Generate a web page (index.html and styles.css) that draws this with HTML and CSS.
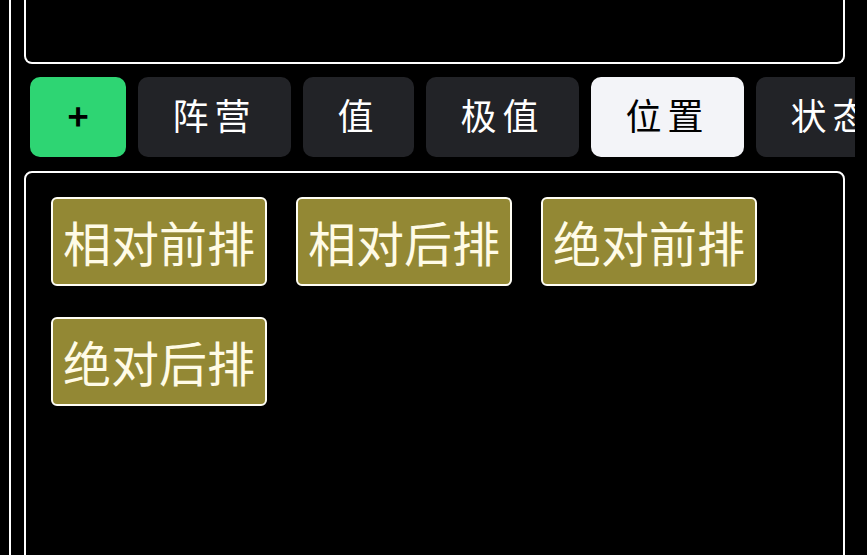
FILE: index.html
```html
<!DOCTYPE html>
<html lang="zh">
<head>
<meta charset="utf-8">
<title>位置</title>
<link rel="stylesheet" href="styles.css">
</head>
<body>
<div class="frame">
  <div class="panel panel-top"></div>
  <div class="tabs">
    <button class="tab tab-add">+</button>
    <button class="tab">阵营</button>
    <button class="tab">值</button>
    <button class="tab">极值</button>
    <button class="tab tab-active">位置</button>
    <button class="tab">状态</button>
  </div>
  <div class="panel panel-main">
    <div class="chips">
      <span class="chip">相对前排</span>
      <span class="chip">相对后排</span>
      <span class="chip">绝对前排</span>
      <span class="chip">绝对后排</span>
    </div>
  </div>
</div>
</body>
</html>
```

FILE: styles.css
```css
html, body {
  margin: 0;
  padding: 0;
  background: #000;
  overflow: hidden;
  height: 555px;
}

body {
  font-family: "Noto Sans CJK SC", "Noto Sans", sans-serif;
  color: #fff;
}

.frame {
  margin-left: 9px;
  border-left: 2px solid #fff;
  height: 555px;
  display: flex;
  flex-direction: column;
  overflow: hidden;
}

.panel {
  margin-left: 13px;
  width: 821px;
  box-sizing: border-box;
  border: 2px solid #fff;
  border-radius: 8px;
  flex-shrink: 0;
}

.panel-top {
  height: 64px;
  border-top: none;
  border-radius: 0 0 8px 8px;
}

.tabs {
  margin-top: 13px;
  margin-left: 19px;
  width: 825px;
  display: flex;
  gap: 12px;
  overflow: hidden;
  flex-shrink: 0;
}

.tab {
  flex-shrink: 0;
  border: none;
  margin: 0;
  font-family: "Noto Sans CJK SC", "Noto Sans", sans-serif;
  font-size: 36px;
  line-height: 52px;
  letter-spacing: 6px;
  padding: 11px 34.5px 17px;
  border-radius: 10px;
  background: #222327;
  color: #fff;
}

.tab-add {
  background: #2ed573;
  color: #000;
  font-weight: 700;
  width: 96px;
  padding: 11px 0 17px 6px;
}

.tab-active {
  background: #f3f4f8;
  color: #000;
}

.panel-main {
  margin-top: 14px;
  height: 400px;
}

.chips {
  display: flex;
  flex-wrap: wrap;
  gap: 31px 29px;
  padding: 24px 25px;
}

.chip {
  background: #938834;
  border: 2px solid #fffef5;
  border-radius: 6px;
  color: #fffbe6;
  font-size: 48px;
  line-height: 69px;
  padding: 8px 10px;
  white-space: nowrap;
}
```
